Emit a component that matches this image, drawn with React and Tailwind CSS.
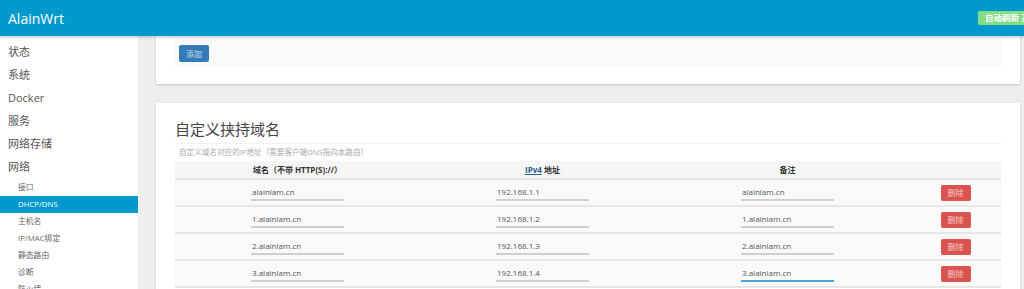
import React from 'react';

const FONT = { fontFamily: '"Open Sans", "Noto Sans CJK SC", sans-serif' };

const mainMenu = ['状态', '系统', 'Docker', '服务', '网络存储', '网络'];
const subMenu = ['接口', 'DHCP/DNS', '主机名', 'IP/MAC绑定', '静态路由', '诊断', '防火墙'];

const rows = [
  { name: 'alainlam.cn', ip: '192.168.1.1', note: 'alainlam.cn' },
  { name: '1.alainlam.cn', ip: '192.168.1.2', note: '1.alainlam.cn' },
  { name: '2.alainlam.cn', ip: '192.168.1.3', note: '2.alainlam.cn' },
  { name: '3.alainlam.cn', ip: '192.168.1.4', note: '3.alainlam.cn', focus: true },
];

function Field({ value, focus }) {
  return (
    <input
      type="text"
      defaultValue={value}
      className={`w-[93px] h-[16px] bg-transparent border-b-2 ${focus ? 'border-[#4aa8d8]' : 'border-[#cfcfcf]'} text-[8px] text-[#555] outline-none px-[1px]`}
    />
  );
}

function App() {
  return (
    <div className="h-[289px] overflow-hidden flex flex-col bg-[#eeeeee]" style={FONT}>
      <header className="h-9 shrink-0 bg-[#0099cc] flex items-center pl-2 overflow-hidden shadow-[0_1px_3px_rgba(0,0,0,0.25)] relative z-10">
        <span className="text-white text-[14px]">AlainWrt</span>
        <div className="flex-1" />
        <button type="button" className="-mr-[18px] w-[64px] shrink-0 h-[14px] pl-[7px] text-left rounded-[2px] bg-[#86dc84] text-white text-[8.5px] font-bold leading-none whitespace-nowrap">
          自动刷新 开
        </button>
      </header>
      <div className="flex flex-1 min-h-0">
        <nav className="w-[138px] shrink-0 bg-white pt-[5px]">
          {mainMenu.map((m) => (
            <div key={m} className="h-[23px] flex items-center pl-2 text-[11px] text-[#555]">{m}</div>
          ))}
          {subMenu.map((s) => (
            <div
              key={s}
              className={`h-[17px] flex items-center pl-[18px] text-[7.8px] ${s === 'DHCP/DNS' ? 'bg-[#0099cc] text-white' : 'text-[#666]'}`}
            >
              {s}
            </div>
          ))}
        </nav>
        <main className="flex-1 pl-[18px] pr-[4px]">
          <section className="bg-white px-[18px] pb-[18px] shadow-[0_1px_2px_rgba(0,0,0,0.2)]">
            <div className="flex bg-[#f9f9f9] pt-[9px] pb-[4px] pl-[5px]">
              <button type="button" className="w-[30px] h-[17px] rounded-[2px] bg-[#337ab7] text-[#cfe0f0] text-[8px]">添加</button>
            </div>
          </section>
          <section className="mt-[19px] bg-white px-[19px] pt-[14px] pb-[10px] shadow-[0_1px_2px_rgba(0,0,0,0.2)]">
            <h2 className="h-[27px] text-[15px] leading-[24px] text-[#444] border-b border-[#f0f0f0]">自定义挟持域名</h2>
            <div className="h-[17px] flex items-center pl-1 text-[7.6px] text-[#aaa]">自定义域名对应的IP地址（需要客户端DNS指向本路由）</div>
            <div className="grid grid-cols-[245px_245px_245px_1fr] h-[17px] bg-[#f5f5f5] text-[8px] font-bold text-[#333] items-center">
              <div className="text-center">域名（不带 HTTP(S)://）</div>
              <div className="text-center"><span className="underline text-[#2a5b8c]">IPv4</span> 地址</div>
              <div className="text-center">备注</div>
              <div />
            </div>
            {rows.map((r) => (
              <div key={r.name} className="grid grid-cols-[245px_245px_245px_1fr] h-[27px] bg-[#f9f9f9] border-t-2 border-[#e6e6e6] items-center">
                <div className="flex justify-center"><Field value={r.name} /></div>
                <div className="flex justify-center"><Field value={r.ip} /></div>
                <div className="flex justify-center"><Field value={r.note} focus={r.focus} /></div>
                <div className="flex justify-center">
                  <button type="button" className="w-[30px] h-[16px] rounded-[2px] bg-[#d9534f] text-[#f4c9c8] text-[8px]">删除</button>
                </div>
              </div>
            ))}
            <div className="border-t-2 border-[#e6e6e6] h-[20px]" />
          </section>
        </main>
      </div>
    </div>
  );
}

export default App;
